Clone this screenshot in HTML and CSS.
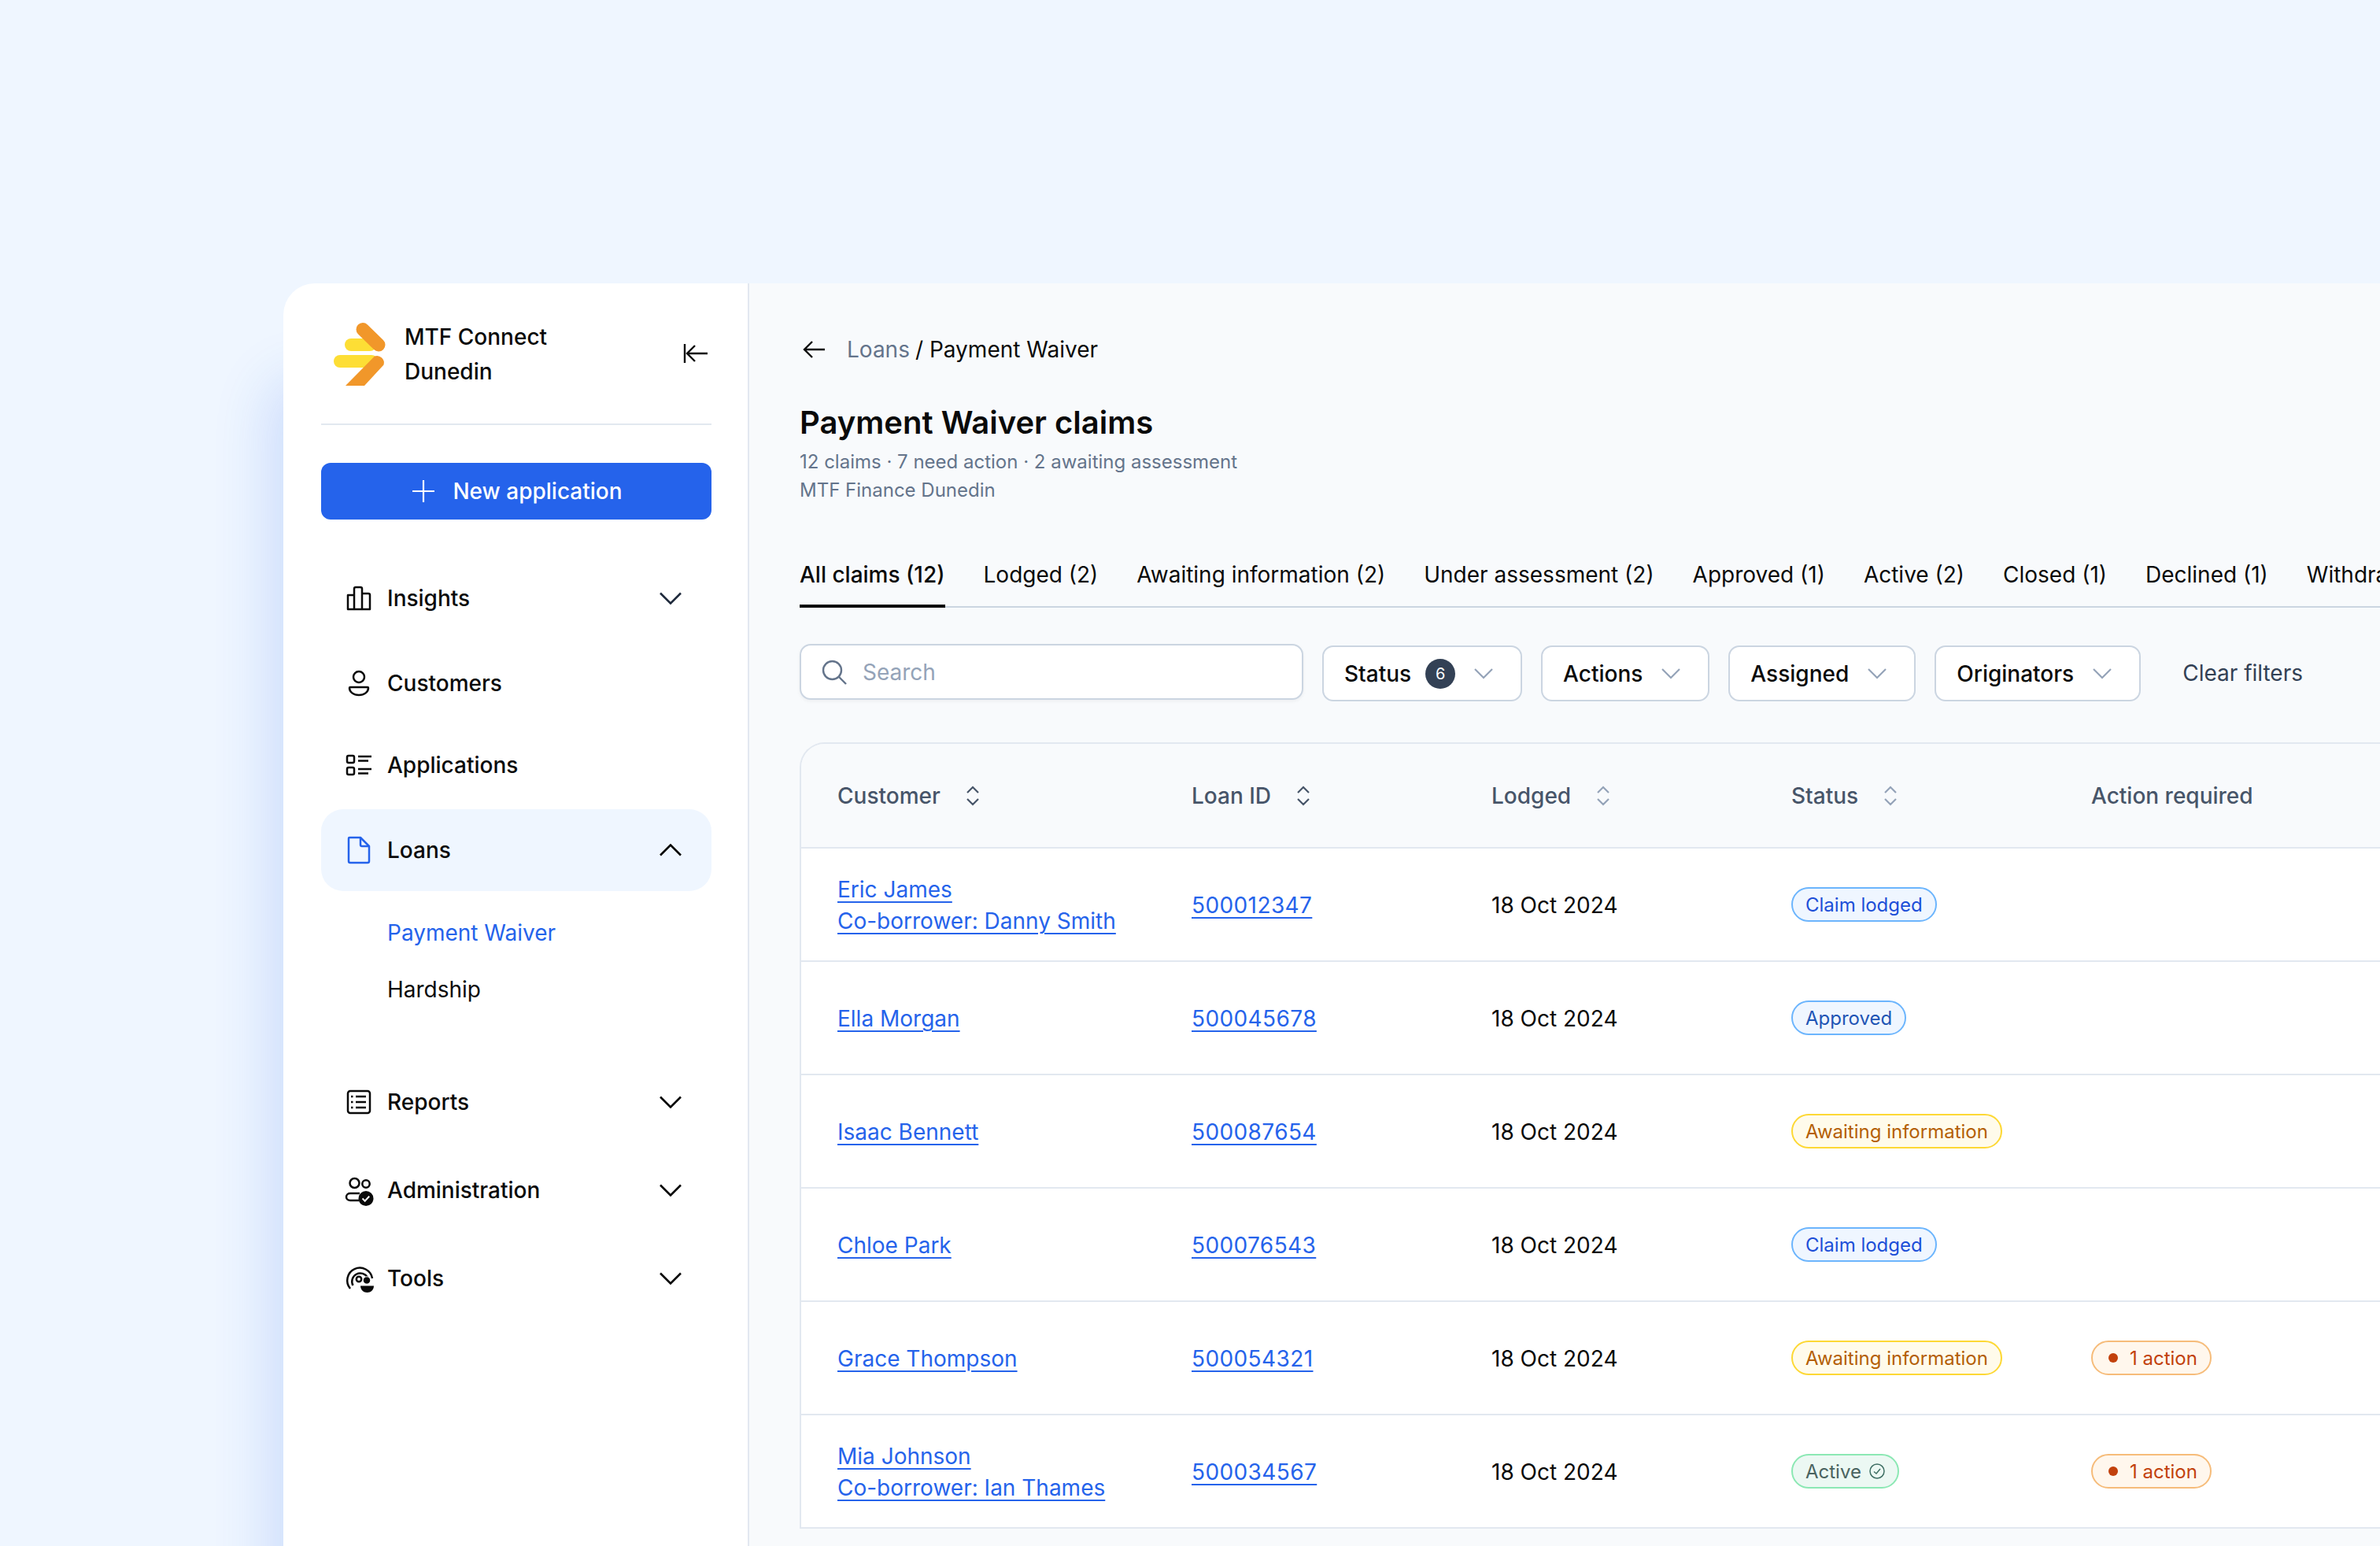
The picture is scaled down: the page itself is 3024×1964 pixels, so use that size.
FILE: index.html
```html
<!DOCTYPE html>
<html lang="en">
<head>
    <meta charset="UTF-8">
    <meta name="viewport" content="width=device-width, initial-scale=1.0">
    <title>Payment Waiver claims</title>
    <link rel="stylesheet" href="styles.css">
</head>
<body>
    <div class="window">
        <aside class="sidebar">
            <div class="brand">
                <svg class="logo" width="66" height="80" viewBox="0 0 66 80">
                    <rect x="14" y="20" width="40" height="16" rx="8" fill="#fdde35"/>
                    <rect x="0" y="41" width="56" height="16" rx="8" fill="#fdde35"/>
                    <path d="M37 8.500L57 28" fill="none" stroke="#f1972a" stroke-width="17" stroke-linecap="round"/>
                    <path d="M15 80L52 42.500A9 9 0 0 1 63.500 53.500L39 80z" fill="#f1972a"/>
                </svg>
                <div class="brand-name">
                    <div>MTF Connect</div>
                    <div>Dunedin</div>
                </div>
                <svg class="collapse" width="32" height="26" viewBox="0 0 32 26" fill="none" stroke="#0a0a0a" stroke-width="2.4">
                    <path d="M2 1v24M31 13H6M15 3L5 13l10 10"/>
                </svg>
            </div>
            <button class="new-app">
                <svg width="30" height="30" viewBox="0 0 30 30" stroke="#fff" stroke-width="2.2"><path d="M15 1v28M1 15h28"/></svg>
                New application
            </button>
            <nav class="nav">
                <div class="nav-item">
                    <svg class="nav-icon" viewBox="0 0 36 36" fill="none" stroke="#0a0a0a" stroke-width="2.5" stroke-linejoin="round">
                        <path d="M4 14h8v18H4zM12 6a2 2 0 0 1 2-2h6a2 2 0 0 1 2 2v26H12zM22 12h8a2 2 0 0 1 2 2v18H22z"/>
                    </svg>
                    <span>Insights</span>
                    <svg class="chevron" viewBox="0 0 28 16" fill="none" stroke="#1e293b" stroke-width="2.6"><path d="M1 1.500l13 13 13-13"/></svg>
                </div>
                <div class="nav-item">
                    <svg class="nav-icon" viewBox="0 0 36 36" fill="none" stroke="#0a0a0a" stroke-width="2.5">
                        <circle cx="18" cy="10" r="7"/>
                        <path d="M7 23h22a1 1 0 0 1 1 1c0 5-5 9-12 9s-12-4-12-9a1 1 0 0 1 1-1z"/>
                    </svg>
                    <span>Customers</span>
                </div>
                <div class="nav-item nav-applications">
                    <svg class="nav-icon" viewBox="0 0 36 36" fill="none" stroke="#0a0a0a" stroke-width="2.5">
                        <rect x="3" y="6" width="9" height="9" rx="2"/>
                        <rect x="3" y="21" width="9" height="9" rx="2"/>
                        <path d="M17 7h17M17 12.500h13M17 23h17M17 28.500h13"/>
                    </svg>
                    <span>Applications</span>
                </div>
                <div class="nav-item active">
                    <svg class="nav-icon" viewBox="0 0 36 36" fill="none" stroke="#2563eb" stroke-width="2.5" stroke-linejoin="round">
                        <path d="M6 2h14l11 11v19a2 2 0 0 1-2 2H7a2 2 0 0 1-2-2V3a1 1 0 0 1 1-1z"/>
                        <path d="M20 2v9a2 2 0 0 0 2 2h9"/>
                    </svg>
                    <span>Loans</span>
                    <svg class="chevron" viewBox="0 0 28 16" fill="none" stroke="#0a0a0a" stroke-width="2.6"><path d="M1 14.500l13-13 13 13"/></svg>
                </div>
                <div class="sub-nav">
                    <div class="sub-item current">Payment Waiver</div>
                    <div class="sub-item">Hardship</div>
                </div>
                <div class="nav-item">
                    <svg class="nav-icon" viewBox="0 0 36 36" fill="none" stroke="#0a0a0a" stroke-width="2.5">
                        <rect x="4" y="4" width="28" height="28" rx="3"/>
                        <path d="M14 11h13M14 18h13M14 25h13"/>
                        <path d="M8 11h2.500M8 18h2.500M8 25h2.500"/>
                    </svg>
                    <span>Reports</span>
                    <svg class="chevron" viewBox="0 0 28 16" fill="none" stroke="#0a0a0a" stroke-width="2.6"><path d="M1 1.500l13 13 13-13"/></svg>
                </div>
                <div class="nav-item nav-lower">
                    <svg class="nav-icon" viewBox="0 0 36 36" fill="none" stroke="#0a0a0a" stroke-width="2.5">
                        <circle cx="12.500" cy="9" r="6"/>
                        <circle cx="27" cy="10" r="4.700"/>
                        <path d="M19 22H7c-2.500 0-5 1.500-5 4.500S4.500 31 7 31h11"/>
                        <circle cx="27" cy="28.500" r="9.500" fill="#0a0a0a" stroke="none"/>
                        <path d="M22.500 28.500l3.200 3.200 5.500-6" stroke="#fff" stroke-width="2"/>
                    </svg>
                    <span>Administration</span>
                    <svg class="chevron" viewBox="0 0 28 16" fill="none" stroke="#0a0a0a" stroke-width="2.6"><path d="M1 1.500l13 13 13-13"/></svg>
                </div>
                <div class="nav-item nav-lower">
                    <svg class="nav-icon" viewBox="0 0 36 36" fill="none" stroke="#0a0a0a" stroke-width="2.5">
                        <path d="M7 31A16 16 0 1 1 35 18"/>
                        <path d="M10.500 27A10.500 10.500 0 1 1 29 17"/>
                        <circle cx="18" cy="19" r="3.200"/>
                        <circle cx="28" cy="20.500" r="4.700" fill="#0a0a0a" stroke="#fff" stroke-width="1"/>
                        <path d="M20 27.500h17c0 5-4 8.500-8.500 8.500S20 32.500 20 27.500z" fill="#0a0a0a" stroke="none"/>
                    </svg>
                    <span>Tools</span>
                    <svg class="chevron" viewBox="0 0 28 16" fill="none" stroke="#0a0a0a" stroke-width="2.6"><path d="M1 1.500l13 13 13-13"/></svg>
                </div>
            </nav>
        </aside>

        <main class="main">
            <div class="breadcrumb">
                <svg width="28" height="24" viewBox="0 0 28 24" fill="none" stroke="#0a0a0a" stroke-width="2.4"><path d="M28 12H2M12 2L2 12l10 10"/></svg>
                <span class="crumb-link">Loans</span>
                <span>/ Payment Waiver</span>
            </div>
            <h1>Payment Waiver claims</h1>
            <p class="meta">12 claims · 7 need action · 2 awaiting assessment</p>
            <p class="meta">MTF Finance Dunedin</p>

            <div class="tabs">
                <div class="tab selected">All claims (12)</div>
                <div class="tab">Lodged (2)</div>
                <div class="tab">Awaiting information (2)</div>
                <div class="tab">Under assessment (2)</div>
                <div class="tab">Approved (1)</div>
                <div class="tab">Active (2)</div>
                <div class="tab">Closed (1)</div>
                <div class="tab">Declined (1)</div>
                <div class="tab">Withdrawn (1)</div>
            </div>

            <div class="toolbar">
                <div class="search">
                    <svg width="32" height="32" viewBox="0 0 32 32" fill="none" stroke="#64748b" stroke-width="2.4"><circle cx="13.500" cy="13.500" r="11.500"/><path d="M22 22l9 9"/></svg>
                    <span>Search</span>
                </div>
                <div class="filter">
                    Status
                    <span class="count">6</span>
                    <svg class="filter-arrow" viewBox="0 0 24 14" fill="none" stroke="#94a3b8" stroke-width="2.2"><path d="M1 1l11 11L23 1"/></svg>
                </div>
                <div class="filter">
                    Actions
                    <svg class="filter-arrow" viewBox="0 0 24 14" fill="none" stroke="#94a3b8" stroke-width="2.2"><path d="M1 1l11 11L23 1"/></svg>
                </div>
                <div class="filter">
                    Assigned
                    <svg class="filter-arrow" viewBox="0 0 24 14" fill="none" stroke="#94a3b8" stroke-width="2.2"><path d="M1 1l11 11L23 1"/></svg>
                </div>
                <div class="filter">
                    Originators
                    <svg class="filter-arrow" viewBox="0 0 24 14" fill="none" stroke="#94a3b8" stroke-width="2.2"><path d="M1 1l11 11L23 1"/></svg>
                </div>
                <div class="clear">Clear filters</div>
            </div>

            <div class="table">
                <div class="row head">
                    <div class="cell">Customer
                        <svg class="sort" viewBox="0 0 18 26" fill="none" stroke="#475569" stroke-width="2.2"><path d="M2 9l7-7 7 7M2 17l7 7 7-7"/></svg>
                    </div>
                    <div class="cell">Loan ID
                        <svg class="sort" viewBox="0 0 18 26" fill="none" stroke="#475569" stroke-width="2.2"><path d="M2 9l7-7 7 7M2 17l7 7 7-7"/></svg>
                    </div>
                    <div class="cell">Lodged
                        <svg class="sort" viewBox="0 0 18 26" fill="none" stroke="#94a3b8" stroke-width="2.2"><path d="M2 9l7-7 7 7M2 17l7 7 7-7"/></svg>
                    </div>
                    <div class="cell">Status
                        <svg class="sort" viewBox="0 0 18 26" fill="none" stroke="#94a3b8" stroke-width="2.2"><path d="M2 9l7-7 7 7M2 17l7 7 7-7"/></svg>
                    </div>
                    <div class="cell">Action required</div>
                </div>

                <div class="row">
                    <div class="cell links"><a>Eric James</a><a>Co-borrower: Danny Smith</a></div>
                    <div class="cell plain"><a class="loan-id">500012347</a></div>
                    <div class="cell plain">18 Oct 2024</div>
                    <div class="cell"><span class="badge blue">Claim lodged</span></div>
                    <div class="cell"></div>
                </div>
                <div class="row">
                    <div class="cell links"><a>Ella Morgan</a></div>
                    <div class="cell plain"><a class="loan-id">500045678</a></div>
                    <div class="cell plain">18 Oct 2024</div>
                    <div class="cell"><span class="badge blue approved">Approved</span></div>
                    <div class="cell"></div>
                </div>
                <div class="row">
                    <div class="cell links"><a>Isaac Bennett</a></div>
                    <div class="cell plain"><a class="loan-id">500087654</a></div>
                    <div class="cell plain">18 Oct 2024</div>
                    <div class="cell"><span class="badge amber">Awaiting information</span></div>
                    <div class="cell"></div>
                </div>
                <div class="row">
                    <div class="cell links"><a>Chloe Park</a></div>
                    <div class="cell plain"><a class="loan-id">500076543</a></div>
                    <div class="cell plain">18 Oct 2024</div>
                    <div class="cell"><span class="badge blue">Claim lodged</span></div>
                    <div class="cell"></div>
                </div>
                <div class="row">
                    <div class="cell links"><a>Grace Thompson</a></div>
                    <div class="cell plain"><a class="loan-id">500054321</a></div>
                    <div class="cell plain">18 Oct 2024</div>
                    <div class="cell"><span class="badge amber">Awaiting information</span></div>
                    <div class="cell"><span class="badge orange"><i class="dot"></i>1 action</span></div>
                </div>
                <div class="row">
                    <div class="cell links"><a>Mia Johnson</a><a>Co-borrower: Ian Thames</a></div>
                    <div class="cell plain"><a class="loan-id">500034567</a></div>
                    <div class="cell plain">18 Oct 2024</div>
                    <div class="cell">
                        <span class="badge green">Active
                            <svg width="20" height="20" viewBox="0 0 20 20" fill="none" stroke="#3f6f64" stroke-width="1.5"><circle cx="10" cy="10" r="9"/><path d="M6 10.500l3 2.500 5-6"/></svg>
                        </span>
                    </div>
                    <div class="cell"><span class="badge orange"><i class="dot"></i>1 action</span></div>
                </div>
            </div>
        </main>
    </div>
</body>
</html>
```

FILE: styles.css
```css
* {
    box-sizing: border-box;
}
html, body {
    height: 100%;
}
body {
    margin: 0;
    padding: 360px 0 0 360px;
    overflow: hidden;
    background-color: #eff6ff;
    font-family: Inter, "Liberation Sans", sans-serif;
    color: #0a0a0a;
}
.window {
    display: flex;
    width: 2664px;
    height: 1604px;
    background-color: white;
    border-top-left-radius: 40px;
    box-shadow: -20px 120px 70px rgba(37, 99, 235, 0.16);
}

/* Sidebar */
.sidebar {
    flex: none;
    width: 592px;
    padding: 0 46px 0 48px;
    border-right: 2px solid #e2e8f0;
}
.brand {
    display: flex;
    align-items: center;
    height: 180px;
    padding: 0 4px 0 16px;
    border-bottom: 2px solid #e2e8f0;
}
.logo {
    flex: none;
    margin-top: 1px;
    margin-right: 24px;
}
.brand-name {
    flex: 1;
    padding-top: 2px;
    font-size: 28px;
    font-weight: 500;
    line-height: 44px;
}
.new-app {
    display: flex;
    align-items: center;
    justify-content: center;
    gap: 22px;
    width: 100%;
    height: 72px;
    margin-top: 48px;
    padding: 0 0 0 2px;
    border: none;
    border-radius: 12px;
    background-color: #2563eb;
    color: white;
    font-family: inherit;
    font-size: 28px;
    font-weight: 500;
}
.nav {
    display: flex;
    flex-direction: column;
    gap: 4px;
    margin-top: 48px;
}
.nav-item {
    display: flex;
    align-items: center;
    height: 104px;
    padding: 0 38px 0 30px;
    border-radius: 28px;
    font-size: 28px;
    font-weight: 500;
}
.nav-item span {
    flex: 1;
}
.nav-applications {
    margin-top: -4px;
}
.nav-lower {
    margin-top: 4px;
}
.nav-item.active {
    background-color: #eff6ff;
}
.nav-icon {
    flex: none;
    width: 36px;
    height: 36px;
    margin-right: 18px;
    overflow: visible;
}
.chevron {
    flex: none;
    width: 28px;
    height: 16px;
}
.sub-nav {
    display: flex;
    flex-direction: column;
    margin-top: 13px;
    margin-bottom: 52px;
}
.sub-item {
    height: 71.5px;
    padding-left: 84px;
    font-size: 28px;
    line-height: 72px;
}
.sub-item.current {
    color: #2563eb;
}

/* Main column */
.main {
    flex: 1;
    min-width: 0;
    overflow: hidden;
    padding: 66px 0 0 64px;
    background-color: #f8fafc;
}
.breadcrumb {
    display: flex;
    align-items: center;
    height: 36px;
    font-size: 28px;
}
.breadcrumb svg {
    margin: 0 28px 0 4px;
}
.crumb-link {
    margin-right: 7px;
    color: #64748b;
}
h1 {
    margin: 47px 0 0 0;
    font-size: 40px;
    font-weight: 600;
    line-height: 56px;
}
.meta {
    margin: 0;
    font-size: 24px;
    line-height: 36px;
    color: #64748b;
}
.meta:first-of-type {
    margin-top: 4px;
}
.tabs {
    display: flex;
    gap: 49px;
    height: 72px;
    margin-top: 59px;
    border-bottom: 2px solid #cbd5e1;
    white-space: nowrap;
}
.tab {
    flex: none;
    height: 72px;
    padding-top: 12px;
    font-size: 28px;
    line-height: 36px;
}
.tab.selected {
    font-weight: 500;
    border-bottom: 4px solid #0a0a0a;
}

/* Filters */
.toolbar {
    display: flex;
    align-items: flex-start;
    gap: 24px;
    margin-top: 46px;
}
.search {
    display: flex;
    align-items: center;
    gap: 20px;
    width: 640px;
    height: 71px;
    padding-left: 26px;
    border: 2px solid #cbd5e1;
    border-radius: 14px;
    background-color: white;
    box-shadow: 0 2px 4px rgba(15, 23, 42, 0.05);
    font-size: 28px;
    color: #94a3b8;
}
.filter {
    display: flex;
    align-items: center;
    height: 71px;
    margin-top: 2px;
    padding: 0 35px 0 26px;
    border: 2px solid #cbd5e1;
    border-radius: 14px;
    background-color: white;
    font-size: 28px;
    font-weight: 500;
}
.count {
    width: 38px;
    height: 38px;
    margin-left: 18px;
    border-radius: 50%;
    background-color: #334155;
    color: white;
    font-size: 20px;
    font-weight: 400;
    line-height: 38px;
    text-align: center;
}
.filter-arrow {
    width: 24px;
    height: 14px;
    margin-left: 24px;
}
.clear {
    margin-top: 2px;
    margin-left: 29px;
    font-size: 28px;
    line-height: 71px;
    color: #334155;
}

/* Table */
.table {
    margin-top: 52px;
    border-top: 2px solid #e2e8f0;
    border-left: 2px solid #e2e8f0;
    border-top-left-radius: 32px;
    overflow: hidden;
}
.row {
    display: grid;
    grid-template-columns: 450px 381px 381px 381px 1fr;
    height: 144px;
    border-bottom: 2px solid #e2e8f0;
    background-color: white;
    font-size: 28px;
}
.row.head {
    height: 133px;
    background-color: #f8fafc;
    color: #475569;
    font-weight: 500;
}
.cell {
    display: flex;
    align-items: center;
    padding-left: 46px;
    min-width: 0;
}
.cell.plain {
    padding-top: 2px;
}
.sort {
    flex: none;
    width: 18px;
    height: 26px;
    margin-left: 32px;
}
.cell.links {
    flex-direction: column;
    align-items: flex-start;
    justify-content: center;
    padding-top: 2px;
}
a {
    color: #2563eb;
    text-decoration: underline;
    text-decoration-thickness: 2px;
    text-underline-offset: 5px;
    line-height: 40px;
}
.loan-id {
    letter-spacing: 0.4px;
}

/* Badges */
.badge {
    display: inline-flex;
    align-items: center;
    height: 44px;
    padding: 0 16px;
    border: 2px solid;
    border-radius: 22px;
    font-size: 24px;
    font-weight: 400;
    white-space: nowrap;
}
.badge.blue {
    border-color: #6cb5fd;
    background-color: #eff6ff;
    color: #1d4fd8;
}
.badge.approved {
    color: #1e55b5;
}
.badge.amber {
    border-color: #fdd835;
    background-color: #fffbeb;
    color: #b45f06;
}
.badge.orange {
    border-color: #f6bc7a;
    background-color: #fff7ed;
    color: #c2410c;
}
.badge.green {
    gap: 10px;
    border-color: #8ce8b4;
    background-color: #ecf8f3;
    color: #4a6360;
}
.dot {
    width: 12px;
    height: 12px;
    margin: 0 15px 0 4px;
    border-radius: 50%;
    background-color: #c2410c;
}
```
